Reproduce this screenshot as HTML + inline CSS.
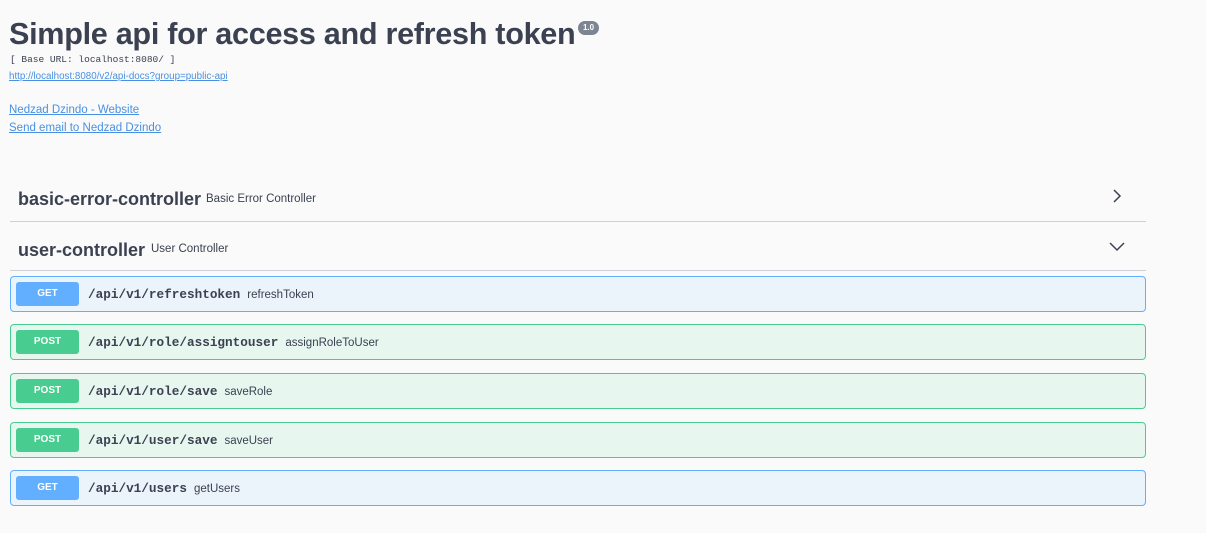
<!DOCTYPE html>
<html><head><style>
body{margin:0;background:#fafafa;font-family:"Liberation Sans",sans-serif;color:#3b4151;width:1206px;height:533px;overflow:hidden;position:relative}
.a{position:absolute}
h1{position:absolute;left:9px;top:17px;margin:0;font-size:30.6px;font-weight:bold;letter-spacing:-0.3px;color:#3b4151}
.badge{position:absolute;left:578px;top:21px;width:21px;height:14px;border-radius:7px;background:#7d8492;color:#fff;font-size:8px;font-weight:bold;text-align:center;line-height:14px}
.base{left:10px;top:54px;font-family:"Liberation Mono",monospace;font-size:9.5px;color:#3b4151}
a{color:#4990e2;text-decoration:underline}
.lnk{position:absolute;left:9px;font-size:11.5px}
.tag{position:absolute;left:10px;width:1136px;border-bottom:1px solid #cdd0d5;height:49px}
.tag b{position:absolute;left:8px;font-size:18px}
.tag span{position:absolute;font-size:11.5px}
.op{position:absolute;left:10px;width:1134px;height:34px;border-radius:4px;border:1px solid}
.get{background:#ebf3fb;border-color:#61affe}
.post{background:#e8f6f0;border-color:#49cc90}
.m{position:absolute;left:5px;top:5px;width:63px;height:24px;border-radius:3px;color:#fff;font-size:10px;font-weight:bold;text-align:center;line-height:24px}
.get .m{background:#61affe}.post .m{background:#49cc90}
.p{position:absolute;left:77px;top:10px;font-family:"Liberation Mono",monospace;font-size:12.7px;color:#3b4151;font-weight:bold}
.p i{font-style:normal;font-family:"Liberation Sans",sans-serif;font-size:11.5px;font-weight:normal;margin-left:7px}
</style></head><body>
<h1>Simple api for access and refresh token</h1>
<div class="badge">1.0</div>
<div class="a base">[ Base URL: localhost:8080/ ]</div>
<a class="lnk" style="top:71px;font-size:9.8px">http://localhost:8080/v2/api-docs?group=public-api</a>
<a class="lnk" style="top:104px">Nedzad Dzindo - Website</a>
<a class="lnk" style="top:122px">Send email to Nedzad Dzindo</a>
<div class="tag" style="top:172px"><b style="top:17px">basic-error-controller</b><span style="left:196px;top:21px">Basic Error Controller</span>
<svg class="a" style="left:1100px;top:17px" width="14" height="14"><path d="M4 1l6 6-6 6" fill="none" stroke="#3b4151" stroke-width="1.5"/></svg></div>
<div class="tag" style="top:221px"><b style="top:19px">user-controller</b><span style="left:141px;top:22px">User Controller</span>
<svg class="a" style="left:1099px;top:19px" width="16" height="12"><path d="M1 3l7 7 7-7" fill="none" stroke="#3b4151" stroke-width="1.5"/></svg></div>
<div class="op get" style="top:276px"><div class="m">GET</div><div class="p">/api/v1/refreshtoken<i>refreshToken</i></div></div>
<div class="op post" style="top:324px"><div class="m">POST</div><div class="p">/api/v1/role/assigntouser<i>assignRoleToUser</i></div></div>
<div class="op post" style="top:373px"><div class="m">POST</div><div class="p">/api/v1/role/save<i>saveRole</i></div></div>
<div class="op post" style="top:422px"><div class="m">POST</div><div class="p">/api/v1/user/save<i>saveUser</i></div></div>
<div class="op get" style="top:470px"><div class="m">GET</div><div class="p">/api/v1/users<i>getUsers</i></div></div>
</body></html>
